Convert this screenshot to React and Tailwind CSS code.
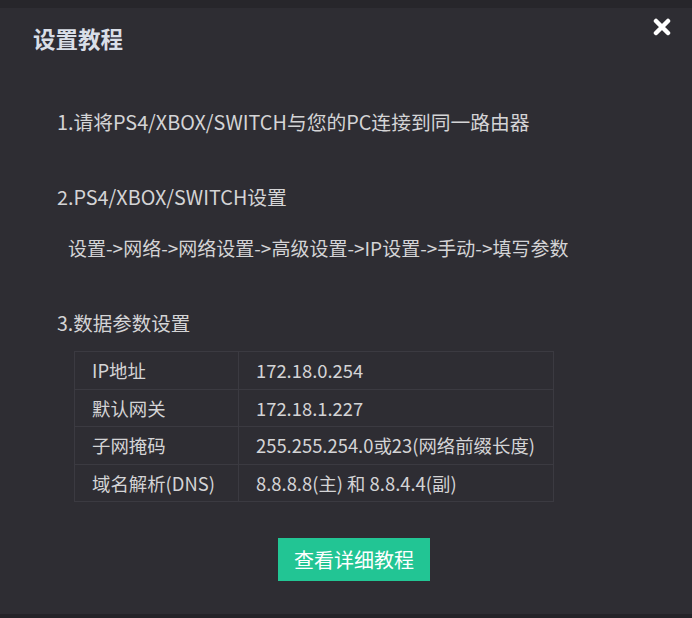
import React from 'react';

const rows = [
  ['IP地址', '172.18.0.254'],
  ['默认网关', '172.18.1.227'],
  ['子网掩码', '255.255.254.0或23(网络前缀长度)'],
  ['域名解析(DNS)', '8.8.8.8(主) 和 8.8.4.4(副)'],
];

const App = () => {
  return (
    <div
      className="w-[692px] h-[618px] bg-[#242328] flex flex-col overflow-hidden"
      style={{ fontFamily: '"Microsoft YaHei", "Noto Sans CJK SC", "Noto Sans", sans-serif' }}
    >
      {/* page behind the dialog */}
      <div className="h-[8px] shrink-0 bg-[#27262b]" />

      {/* dialog */}
      <div className="relative flex-1 bg-[#2e2d33] flex flex-col">
        <button className="absolute right-[21px] top-[10px]">
          <svg width="18" height="18" viewBox="0 0 18 18">
            <path d="M3 3 L15 15 M15 3 L3 15" stroke="#ffffff" strokeWidth="4.5" strokeLinecap="round" />
          </svg>
        </button>

        <h2 className="pl-[33px] pt-[16px] text-[22.5px] leading-[28px] font-bold text-[#d9dee7]">设置教程</h2>

        <div className="pl-[57px] pt-[57px] text-[19.8px] leading-[26px] text-[#d4d4d6]">
          1.请将PS4/XBOX/SWITCH与您的PC连接到同一路由器
        </div>

        <div className="pl-[57px] pt-[49px] text-[19.8px] leading-[26px] text-[#d4d4d6]">
          2.PS4/XBOX/SWITCH设置
        </div>

        <div className="pl-[68px] pt-[25px] text-[19px] leading-[26px] text-[#d4d4d6]">
          设置-&gt;网络-&gt;网络设置-&gt;高级设置-&gt;IP设置-&gt;手动-&gt;填写参数
        </div>

        <div className="pl-[57px] pt-[49px] text-[19.5px] leading-[26px] text-[#d4d4d6]">
          3.数据参数设置
        </div>

        <div className="pl-[74px] pt-[15px]">
          <table className="w-[480px] border-collapse text-[18.4px] text-[#d4d4d6]">
            <tbody>
              {rows.map(([k, v]) => (
                <tr key={k} className="h-[37.5px]">
                  <td className="w-[164px] border border-[#3b3a41] pl-[17px] leading-[24px]">{k}</td>
                  <td className="border border-[#3b3a41] pl-[17px] leading-[24px]">{v}</td>
                </tr>
              ))}
            </tbody>
          </table>
        </div>

        <div className="pl-[278px] pt-[36px]">
          <button className="w-[152px] h-[43px] bg-[#22c594] text-white text-[20px] leading-[26px]">查看详细教程</button>
        </div>
      </div>

      <div className="h-[4px] shrink-0 bg-[#242328]" />
    </div>
  );
};

export default App;
